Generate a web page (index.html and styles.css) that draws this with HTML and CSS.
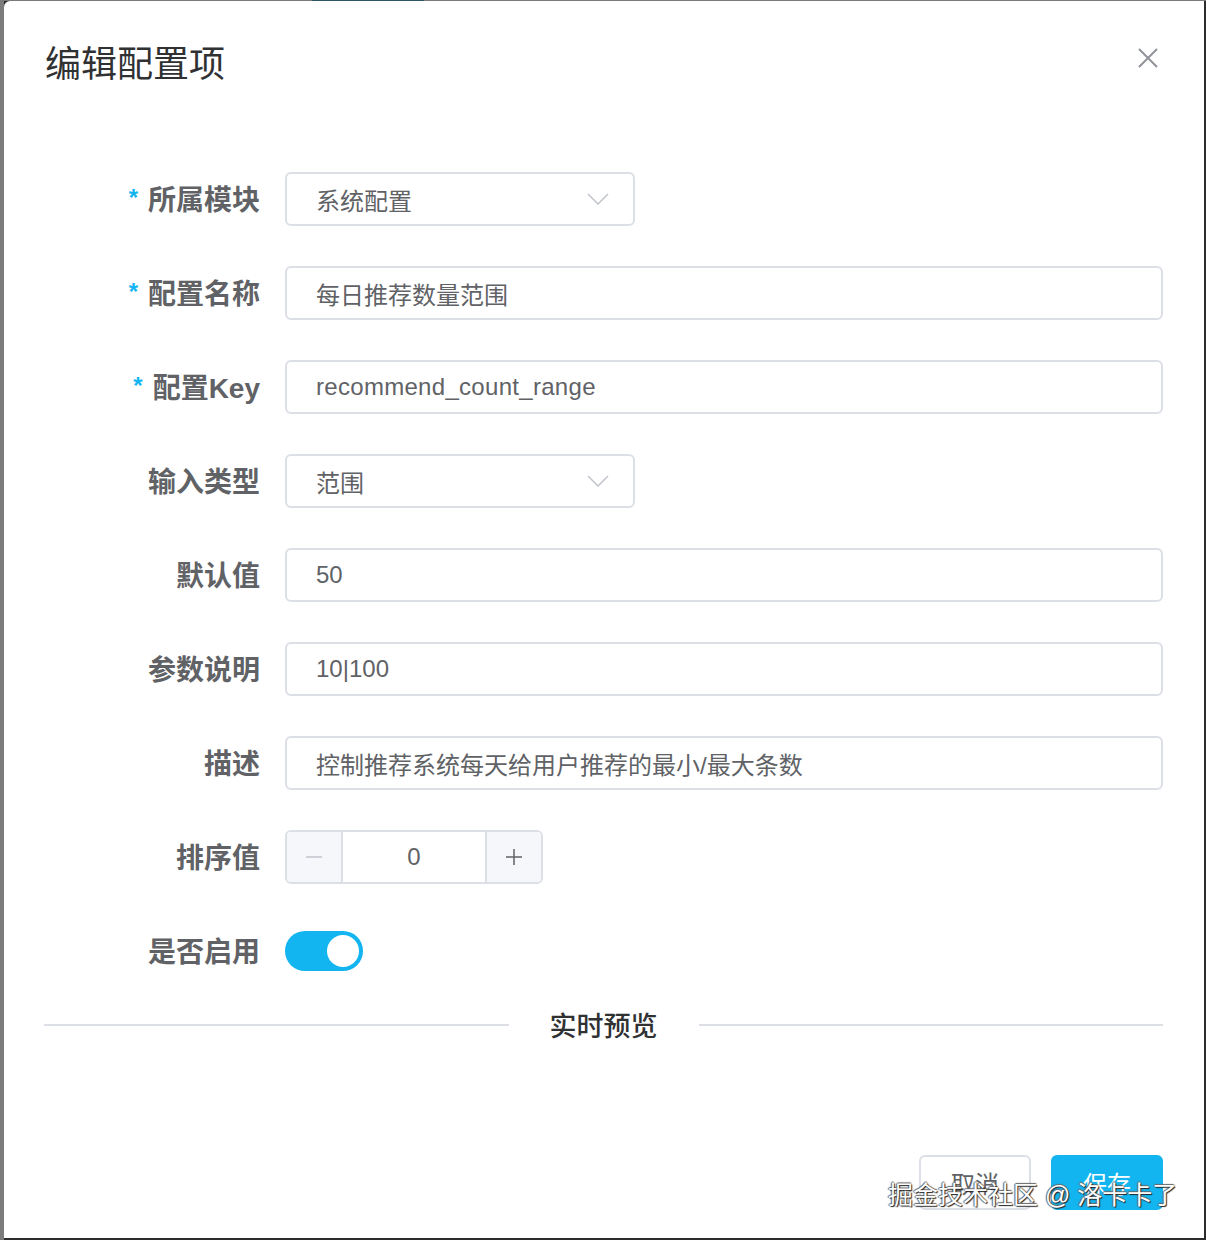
FILE: index.html
```html
<!DOCTYPE html>
<html lang="zh-CN">
<head>
    <meta charset="UTF-8">
    <title>编辑配置项</title>
    <link rel="stylesheet" href="styles.css">
</head>
<body>

    <div class="dialog">
        <div class="dialog-header">
            <span class="dialog-title">编辑配置项</span>
            <button class="dialog-close" type="button" aria-label="关闭">
                <svg width="24" height="24" viewBox="0 0 24 24">
                    <path d="M3 3 L21 21 M21 3 L3 21" stroke="#909399" stroke-width="2" fill="none"/>
                </svg>
            </button>
        </div>

        <div class="dialog-body">
            <form class="config-form">
                <div class="form-row">
                    <label class="form-label"><span class="required">*</span>所属模块</label>
                    <div class="select">
                        <span>系统配置</span>
                        <svg width="22" height="12" viewBox="0 0 22 12">
                            <path d="M1 1 L11 11 L21 1" stroke="#c0c4cc" stroke-width="1.5" fill="none"/>
                        </svg>
                    </div>
                </div>
                <div class="form-row">
                    <label class="form-label"><span class="required">*</span>配置名称</label>
                    <input class="input" type="text" value="每日推荐数量范围">
                </div>
                <div class="form-row">
                    <label class="form-label"><span class="required">*</span>配置Key</label>
                    <input class="input latin" type="text" value="recommend_count_range">
                </div>
                <div class="form-row">
                    <label class="form-label">输入类型</label>
                    <div class="select">
                        <span>范围</span>
                        <svg width="22" height="12" viewBox="0 0 22 12">
                            <path d="M1 1 L11 11 L21 1" stroke="#c0c4cc" stroke-width="1.5" fill="none"/>
                        </svg>
                    </div>
                </div>
                <div class="form-row">
                    <label class="form-label">默认值</label>
                    <input class="input" type="text" value="50">
                </div>
                <div class="form-row">
                    <label class="form-label">参数说明</label>
                    <input class="input" type="text" value="10|100">
                </div>
                <div class="form-row">
                    <label class="form-label">描述</label>
                    <input class="input" type="text" value="控制推荐系统每天给用户推荐的最小/最大条数">
                </div>
                <div class="form-row">
                    <label class="form-label">排序值</label>
                    <div class="number-input">
                        <span class="num-btn disabled">
                            <svg width="18" height="18" viewBox="0 0 18 18">
                                <path d="M1 9 H17" stroke="#c0c4cc" stroke-width="1.5"/>
                            </svg>
                        </span>
                        <span class="num-value">0</span>
                        <span class="num-btn plus">
                            <svg width="18" height="18" viewBox="0 0 18 18">
                                <path d="M1 9 H17 M9 1 V17" stroke="#606266" stroke-width="1.5"/>
                            </svg>
                        </span>
                    </div>
                </div>
                <div class="form-row">
                    <label class="form-label">是否启用</label>
                    <span class="switch"><span class="switch-knob"></span></span>
                </div>
            </form>

            <div class="divider">
                <span class="divider-line"></span>
                <span class="divider-text">实时预览</span>
                <span class="divider-line"></span>
            </div>

            <div class="preview"></div>
        </div>

        <div class="dialog-footer">
            <button type="button" class="btn">取消</button>
            <button type="button" class="btn btn-primary">保存</button>
        </div>
    </div>

    <div class="watermark">掘金技术社区 @ 洛卡卡了</div>

</body>
</html>
```

FILE: styles.css
```css
body {
    margin: 0;
    padding: 1px 0 0 4px;
    width: 1206px;
    height: 1240px;
    box-sizing: border-box;
    overflow: hidden;
    font-family: 'Liberation Sans', 'Noto Sans CJK SC', sans-serif;
    background:
        linear-gradient(#2b5565, #2b5565) 312px 0 / 112px 1px no-repeat,
        linear-gradient(#7a7a7a, #7a7a7a) 0 0 / 100% 1px no-repeat,
        linear-gradient(#7c7c7c, #7c7c7c) 0 0 / 4px 100% no-repeat,
        #2c2c2c;
    position: relative;
}
.dialog {
    width: 1200px;
    height: 1237px;
    background-color: white;
    border-radius: 6px 0 0 0;
    box-sizing: border-box;
    overflow: hidden;
}
.dialog-header {
    display: flex;
    justify-content: space-between;
    padding: 40px 44px 0 41px;
    height: 48px;
}
.dialog-title {
    font-size: 36px;
    line-height: 48px;
    color: #303133;
}
.dialog-close {
    align-self: flex-start;
    margin-top: 5px;
    width: 24px;
    height: 24px;
    padding: 0;
    border: none;
    background: none;
    cursor: pointer;
}
.dialog-body {
    padding: 83px 41px 0 40px;
}
.form-row {
    display: flex;
    align-items: center;
    height: 54px;
    margin-bottom: 40px;
}
.form-row:last-child {
    margin-bottom: 0;
}
.form-label {
    width: 241px;
    padding-right: 25px;
    padding-bottom: 3px;
    box-sizing: border-box;
    text-align: right;
    font-size: 28px;
    font-weight: bold;
    color: #606266;
}
.required {
    color: #13b5f0;
    font-size: 24px;
    margin-right: 10px;
    vertical-align: 4px;
}
.input, .select {
    height: 54px;
    box-sizing: border-box;
    border: 2px solid #dcdfe6;
    border-radius: 6px;
    padding: 0 29px;
    font-family: inherit;
    font-size: 24px;
    color: #606266;
    background: white;
}
.input {
    flex: 1;
    outline: none;
}
.input.latin {
    letter-spacing: 0.3px;
}
.select {
    width: 350px;
    display: flex;
    align-items: center;
    justify-content: space-between;
    padding-right: 24px;
}
.number-input {
    width: 258px;
    height: 54px;
    box-sizing: border-box;
    border: 2px solid #dcdfe6;
    border-radius: 6px;
    display: flex;
    overflow: hidden;
}
.num-btn {
    width: 54px;
    background-color: #f5f7fa;
    display: flex;
    align-items: center;
    justify-content: center;
}
.num-btn.disabled {
    border-right: 2px solid #dcdfe6;
}
.num-btn.plus {
    border-left: 2px solid #dcdfe6;
}
.num-value {
    flex: 1;
    text-align: center;
    line-height: 50px;
    font-size: 24px;
    color: #606266;
}
.switch {
    width: 78px;
    height: 40px;
    border-radius: 20px;
    background-color: #13b5f0;
    display: flex;
    align-items: center;
    justify-content: flex-end;
    padding: 0 4px;
    box-sizing: border-box;
}
.switch-knob {
    width: 32px;
    height: 32px;
    border-radius: 50%;
    background-color: white;
}
.divider {
    display: flex;
    align-items: center;
    height: 40px;
    margin-top: 27px;
}
.divider-line {
    flex: 1;
    height: 2px;
    background-color: #dcdfe6;
}
.divider-text {
    padding: 0 41px 2px;
    font-size: 27px;
    font-weight: 500;
    color: #303133;
}
.preview {
    height: 110px;
}
.dialog-footer {
    display: flex;
    justify-content: flex-end;
    gap: 20px;
    padding-right: 41px;
}
.btn {
    width: 112px;
    height: 55px;
    border: 2px solid #dcdfe6;
    border-radius: 6px;
    background-color: white;
    font-family: inherit;
    font-size: 24px;
    color: #606266;
    cursor: pointer;
}
.btn-primary {
    background-color: #13b5f0;
    border-color: #13b5f0;
    color: white;
}
.watermark {
    position: absolute;
    left: 888px;
    top: 1175px;
    font-size: 25px;
    color: white;
    white-space: nowrap;
    text-shadow: 1px 1px 1px #222, -1px 0 1px #666, 0 -1px 1px #666;
}
```
